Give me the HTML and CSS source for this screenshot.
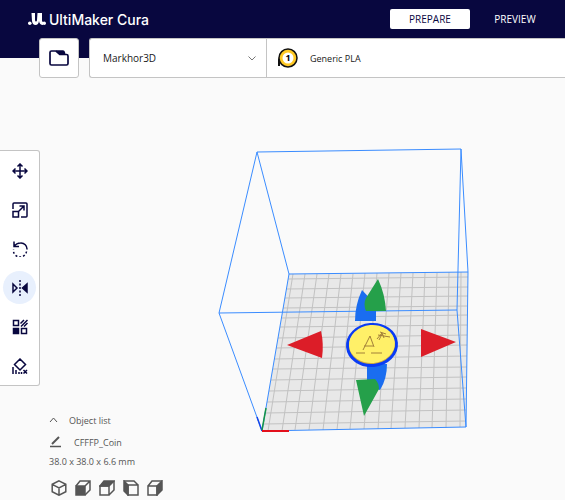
FILE: index.html
```html
<!DOCTYPE html>
<html lang="en">
<head>
<meta charset="utf-8">
<meta name="viewport" content="width=device-width, initial-scale=1">
<title>UltiMaker Cura</title>
<link rel="stylesheet" href="styles.css">
</head>
<body>
<div class="app">
  <header class="topbar">
    <div class="brand">
      <svg class="brand-mark" width="18" height="12" viewBox="0 0 18 12" fill="currentColor" aria-hidden="true">
        <path d="M3.500 0H7v7q0 1.500 1 1.500T9 7L9.500 0H14v7.500q0 1 1 1.500v3q-3.500 0-4-4-.5 4-3.500 4t-3.500-4z"/>
        <circle cx="1.800" cy="10.200" r="1.800"/><circle cx="16.200" cy="10.200" r="1.800"/>
      </svg>
      <span>UltiMaker Cura</span>
    </div>
    <nav class="stages">
      <button class="stage-tab active" type="button">PREPARE</button>
      <button class="stage-tab" type="button">PREVIEW</button>
    </nav>
  </header>

  <div class="config">
    <button class="open-file" type="button" aria-label="Open file">
      <svg width="20" height="16" viewBox="0 0 20 16" fill="none" stroke="currentColor" stroke-width="1.700" stroke-linejoin="round" aria-hidden="true">
        <path d="M1 2.500Q1 1 2.500 1H7l4 3.500h6.500Q19 4.500 19 6v7.500q0 1.500-1.500 1.500h-15Q1 15 1 13.500z"/><path d="M7 .2h7q1.500 0 2 1.800l.5 2.500H11z" fill="currentColor" stroke="none"/>
      </svg>
    </button>
    <div class="setup">
      <button class="machine" type="button">
        <span>Markhor3D</span>
        <svg width="8" height="5" viewBox="0 0 8 5" fill="none" stroke="#777" aria-hidden="true"><path d="M.5.5 4 4 7.500.5"/></svg>
      </button>
      <button class="material" type="button">
        <svg width="22" height="22" viewBox="0 0 22 22" aria-hidden="true">
          <path d="M1 10v9h2v-4z" fill="#111"/>
          <circle cx="11" cy="11" r="9" fill="#ffc924" stroke="#111" stroke-width="1.500"/>
          <circle cx="11" cy="11" r="5.500" fill="#fff"/>
          <text class="extruder-number" x="11" y="14" text-anchor="middle">1</text>
        </svg>
        <span>Generic PLA</span>
      </button>
    </div>
  </div>

  <main class="workspace">
    <svg class="scene" viewBox="0 78 565 422" role="img" aria-label="Build plate with a coin model">
      <path class="plate" d="M289 274 468 272 466 427 262 431z"/>
      <path class="grid" d="M293 274 268 431M305 274 282 431M317 274 295 430M329 274 309 430M341 274 323 430M353 274 337 430M365 273 350 429M377 273 364 429M389 273 378 429M401 273 391 429M413 273 405 428M425 273 419 428M437 273 432 428M449 272 446 428M461 272 460 427
        M288 279 468 277M286 289 468 287M285 298 468 296M283 308 467 306M282 318 467 315M280 327 467 325M278 338 467 335M276 348 467 345M274 359 467 356M273 369 467 367M271 380 467 377M269 391 466 388M267 402 466 399M265 413 466 410M263 424 466 421"/>
      <path class="volume" d="M257 152 461 149 468 272 289 274zM257 152 219 313 262 431 289 274M219 313 457 310 461 149M457 310 466 427 468 272M262 431 466 427"/>
      <path d="M257 417 262 431" stroke="#1546e8" stroke-width="1.500"/>
      <path d="M262 430 266 408" stroke="#159447" stroke-width="1.500"/>
      <path d="M262 431h27" stroke="#e3101c" stroke-width="2"/>
      <path fill="#1a6df0" d="M362 290Q355 305 355 321H376V305zM367 364H387Q387 379 380 390L367 385z"/>
      <path fill="#25a04a" d="M378 279Q385 294 386 311H366Q363 304 366 298zM356 380 375 379Q379 383 379 389L364 416z"/>
      <path fill="#dc1d28" d="M287 345 321 331Q324 344 322 358zM421 329 456 342 421 357z"/>
      <g transform="rotate(-5 372 345)">
        <ellipse cx="372" cy="345" rx="24.500" ry="20.500" fill="#c9a742" stroke="#0a3cf5" stroke-width="3"/>
        <ellipse cx="372" cy="344" rx="23" ry="19" fill="#fff068"/>
      </g>
      <path fill="none" stroke="#a28039" d="M363 350 370 336 374 347M364 346H373M356 353H365M371 353H382M377 339 382 333 384 338M378 335 390 337M380 332 386 334M382 334 379 340"/>
    </svg>

    <div class="tools" role="toolbar" aria-label="Tools">
      <button class="tool" type="button" aria-label="Move">
        <svg width="16" height="16" viewBox="0 0 16 16" aria-hidden="true"><path d="M8 1v14M1 8h14M5.500 3.500 8 1l2.500 2.500M5.500 12.500 8 15l2.500-2.500M3.500 5.500 1 8l2.500 2.500M12.500 5.500 15 8l-2.500 2.500"/></svg>
      </button>
      <button class="tool" type="button" aria-label="Scale">
        <svg width="16" height="16" viewBox="0 0 16 16" aria-hidden="true"><path d="M1 7V2q0-1 1-1h12q1 0 1 1v12q0 1-1 1H9M1 9.500h5.500V15H1zM6.500 9.500 12 4M7.500 4H12v4.500"/></svg>
      </button>
      <button class="tool" type="button" aria-label="Rotate">
        <svg width="16" height="16" viewBox="0 0 16 16" aria-hidden="true"><path d="M2 .5v5h5M2 5.500Q4.500 2 8.500 2A6 6 0 0 1 15 8.500"/><path stroke-dasharray="2 2" d="M14.500 10.500a6.500 6.500 0 0 1-13-2"/></svg>
      </button>
      <button class="tool selected" type="button" aria-label="Mirror" aria-pressed="true">
        <svg width="18" height="16" viewBox="0 0 18 16" aria-hidden="true"><path d="M2 4v8l4-4z"/><path class="solid" d="M16 4v8l-4.500-4z"/><path stroke-dasharray="2 1.500" d="M9 0v16"/></svg>
      </button>
      <button class="tool" type="button" aria-label="Per model settings">
        <svg width="16" height="16" viewBox="0 0 16 16" aria-hidden="true"><path d="M1.500 1.500h5v5h-5zM9.500 9.500h5v5h-5zM8.500 4.500l3.500-3.500M9 7.500l6.500-6.500M12 7.500l3.500-3.500"/><path class="solid" d="M1.500 9.500h5v5h-5z"/></svg>
      </button>
      <button class="tool" type="button" aria-label="Support blocker">
        <svg width="16" height="16" viewBox="0 0 16 16" aria-hidden="true"><path d="M8 1l5.500 5.500L8 12 2.500 6.500zM1 9v7M4 12v4M11.500 12l3.500 3.500M15 12l-3.500 3.500M7 14v2M9.500 14v2"/></svg>
      </button>
    </div>

    <section class="objects" aria-label="Objects">
      <button class="object-toggle" type="button">
        <svg width="9" height="6" viewBox="0 0 9 6" fill="none" stroke="currentColor" aria-hidden="true"><path d="M1 5 4.500 1 8 5"/></svg>
        <span>Object list</span>
      </button>
      <button class="object-name" type="button">
        <svg width="12" height="12" viewBox="0 0 12 12" fill="none" stroke="currentColor" aria-hidden="true"><path stroke-width="2" d="M3 8 10 1"/><path stroke-width="1.500" d="M1 10.500h11"/></svg>
        <span>CFFFP_Coin</span>
      </button>
      <p class="dimensions">38.0 x 38.0 x 6.6 mm</p>
      <div class="views">
        <button type="button" aria-label="3D view"><svg width="16" height="16" viewBox="0 0 16 16" aria-hidden="true"><path d="M8 .8l6.800 3.500v7.400L8 15.200l-6.800-3.500V4.300zM1.200 4.300 8 8l6.800-3.700M8 8v7"/></svg></button>
        <button type="button" aria-label="Front view"><svg width="16" height="16" viewBox="0 0 16 16" aria-hidden="true"><path class="solid" d="M1 6h9v9H1z"/><path d="M1 6l4-5h10v9l-5 5M10 6l5-5"/></svg></button>
        <button type="button" aria-label="Top view"><svg width="16" height="16" viewBox="0 0 16 16" aria-hidden="true"><path class="solid" d="M1 6l4-5h10l-5 5z"/><path d="M1 6h9v9H1zM15 1v9l-5 5"/></svg></button>
        <button type="button" aria-label="Left view"><svg width="16" height="16" viewBox="0 0 16 16" aria-hidden="true"><path class="solid" d="M1 1l4 4v10l-4-4z"/><path d="M5 5h10v10H5zM1 1h10l4 4"/></svg></button>
        <button type="button" aria-label="Right view"><svg width="16" height="16" viewBox="0 0 16 16" aria-hidden="true"><path class="solid" d="M10 6l5-5v9l-5 5z"/><path d="M1 6h9v9H1zM1 6l4-5h10"/></svg></button>
      </div>
    </section>
  </main>
</div>
</body>
</html>
```
FILE: styles.css
```css
* { box-sizing: border-box; }

body {
  margin: 0;
  font-family: "Open Sans", "Noto Sans", sans-serif;
  font-size: 10px;
  color: #08073f;
}

button {
  margin: 0;
  padding: 0;
  border: 0;
  background: none;
  color: inherit;
  font: inherit;
}

svg { flex: none; }

.app {
  display: flex;
  flex-direction: column;
  min-height: 100vh;
  background: linear-gradient(#08073f 58px, #fafafa 58px);
}

.topbar {
  display: flex;
  align-items: center;
  justify-content: space-between;
  height: 38px;
  padding: 0 10px 0 28px;
}

.brand {
  display: flex;
  align-items: center;
  gap: 3px;
  color: #fff;
  font-family: Inter, sans-serif;
  font-size: 14px;
  font-weight: 500;
}

.stages { display: flex; gap: 5px; }

.stage-tab {
  width: 80px;
  height: 20px;
  border-radius: 2px;
  color: #fff;
}

.stage-tab.active { background: #fff; color: #08073f; }

.config {
  display: flex;
  gap: 10px;
  height: 40px;
  padding-left: 39px;
}

.open-file {
  display: grid;
  place-items: center;
  width: 40px;
  border: 1px solid #c4c4c4;
  border-radius: 3px;
  background: #fff;
}

.setup {
  display: flex;
  flex: 1;
  border: 1px solid #c4c4c4;
  border-right: 0;
  border-radius: 3px 0 0 3px;
  background: #fff;
}

.machine {
  display: flex;
  align-items: center;
  justify-content: space-between;
  width: 177px;
  padding: 0 10px 0 13px;
  border-right: 1px solid #c4c4c4;
  color: #191919;
}

.material {
  display: flex;
  flex: 1;
  align-items: center;
  gap: 11px;
  padding-left: 10px;
  color: #191919;
  font-size: 9px;
}

.extruder-number { font-size: 9px; font-weight: 700; }

.workspace {
  display: grid;
  flex: 1;
  grid-template-rows: auto 1fr;
}

.scene {
  grid-area: 1 / 1 / 3 / 2;
  width: 100%;
  align-self: start;
}

.plate { fill: #e8e8e8; }
.grid { fill: none; stroke: #c2c2c2; }
.volume { fill: none; stroke: #3a8cff; }

.tools {
  display: flex;
  flex-direction: column;
  grid-area: 1 / 1;
  gap: 6px;
  justify-self: start;
  z-index: 1;
  margin-top: 72px;
  padding: 3px;
  border: 1px solid #c4c4c4;
  border-left: 0;
  border-radius: 0 3px 3px 0;
  background: #fff;
}

.tool {
  display: grid;
  place-items: center;
  width: 33px;
  height: 33px;
  border-radius: 50%;
}

.tool.selected { background: #e8f0fd; }

.tool svg,
.views svg {
  display: block;
  fill: none;
  stroke: currentColor;
  stroke-width: 1.5;
}

.tool .solid,
.views .solid { fill: currentColor; }

.objects {
  grid-area: 2 / 1;
  align-self: end;
  justify-self: start;
  z-index: 1;
  padding: 0 0 4px 49px;
  color: #555;
  font-size: 9px;
}

.object-toggle,
.object-name {
  display: flex;
  align-items: center;
  height: 22px;
}

.object-toggle { gap: 11px; }
.object-name { gap: 13px; }

.dimensions { margin: 0 0 9px; line-height: 18px; }

.views { display: flex; gap: 8px; padding-left: 2px; }
```
